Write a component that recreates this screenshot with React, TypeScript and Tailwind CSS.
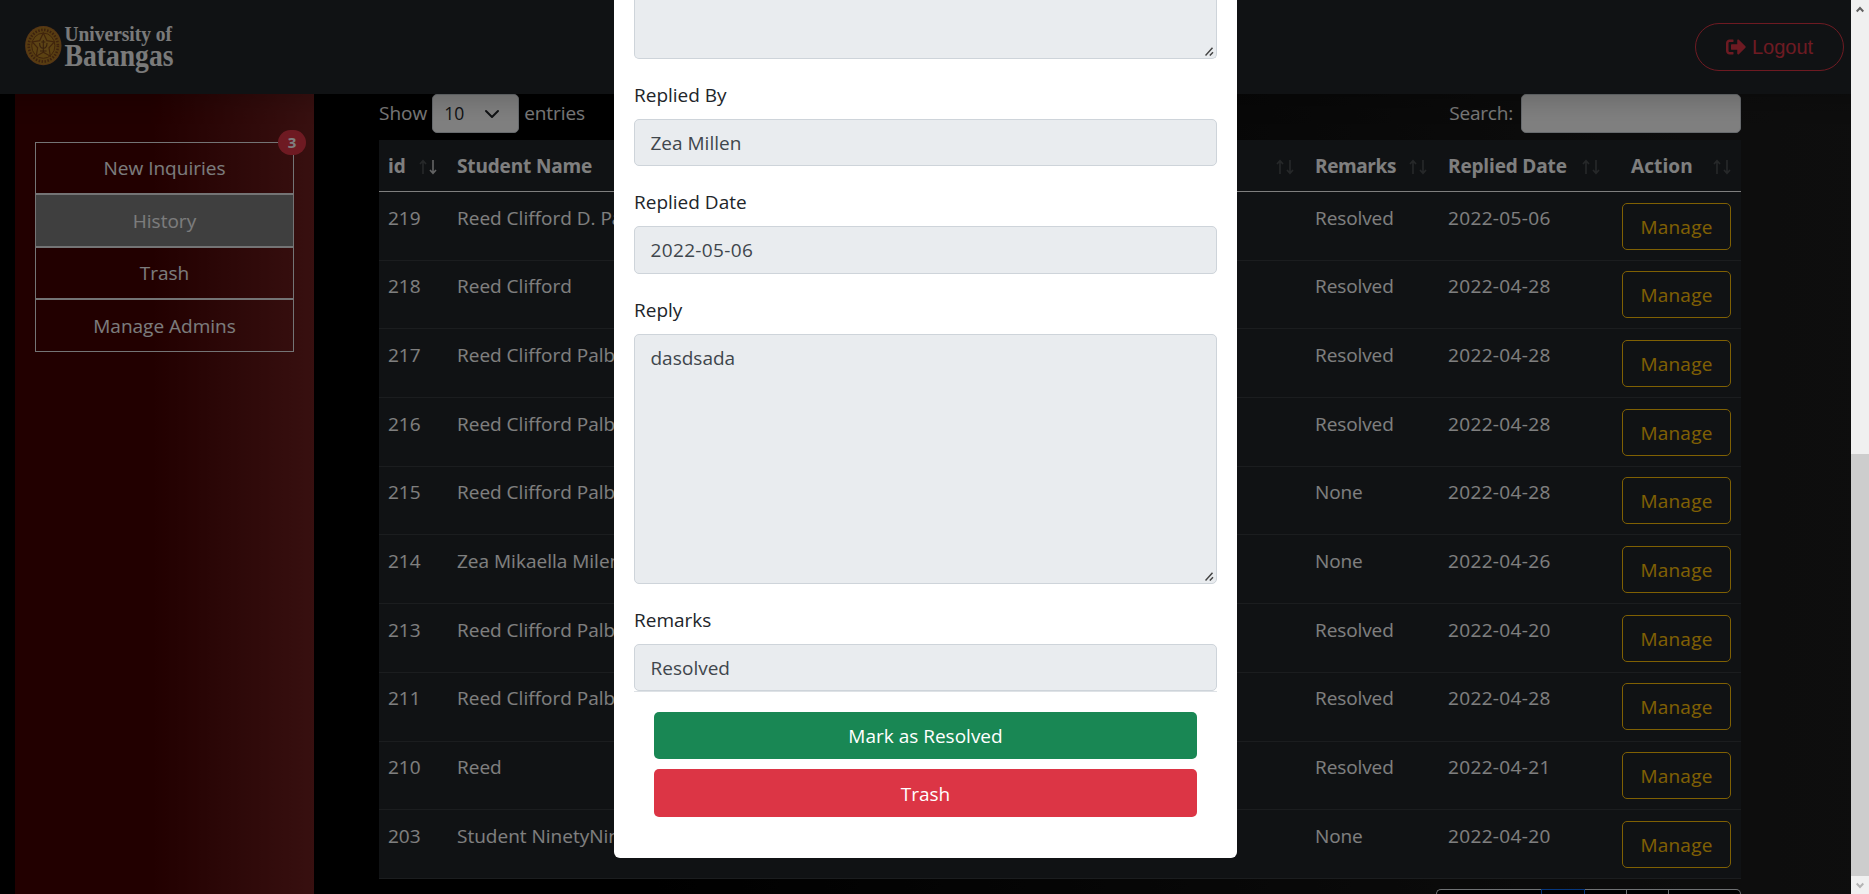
import React from "react";
import { FaSignOutAlt } from "react-icons/fa";

const rows = [
  ["219", "Reed Clifford D. Palbacal", "Resolved", "2022-05-06"],
  ["218", "Reed Clifford", "Resolved", "2022-04-28"],
  ["217", "Reed Clifford Palbacal", "Resolved", "2022-04-28"],
  ["216", "Reed Clifford Palbacal", "Resolved", "2022-04-28"],
  ["215", "Reed Clifford Palbacal", "None", "2022-04-28"],
  ["214", "Zea Mikaella Milen", "None", "2022-04-26"],
  ["213", "Reed Clifford Palbacal", "Resolved", "2022-04-20"],
  ["211", "Reed Clifford Palbacal", "Resolved", "2022-04-28"],
  ["210", "Reed", "Resolved", "2022-04-21"],
  ["203", "Student NinetyNine", "None", "2022-04-20"],
];

const columns = "grid grid-cols-[68px_858px_133px_173px_130px]";

function Logo() {
  return (
    <svg width="150" height="60" viewBox="0 0 150 60" className="block overflow-visible">
      <g transform="translate(0 -2)">
        <ellipse cx="18.3" cy="30.7" rx="18.2" ry="19.6" fill="#b06c2c" />
        <ellipse cx="18.3" cy="30.7" rx="17.2" ry="18.6" fill="#ae7a22" />
        <ellipse cx="18.3" cy="30.7" rx="14.6" ry="15.8" fill="none" stroke="#7a421c" strokeWidth="2.6" strokeDasharray="1.5 1.5" />
        <ellipse cx="18.3" cy="30.7" rx="11.6" ry="12.6" fill="#b98524" stroke="#804818" strokeWidth="1" />
        <path d="M18.3 18l3.6 7.6 7.4 1.2-5.3 6 1.3 8.4-7-4-7 4 1.3-8.4-5.3-6 7.4-1.2z" fill="#b8862a" stroke="#804818" strokeWidth="1.2" />
        <path d="M18.3 25v12M14.6 28c0 7 7.4 7 7.4 0M15 36h6.6M16.3 27h4" stroke="#70401a" strokeWidth="1.1" fill="none" />
      </g>
      <text x="39.5" y="24.2" textLength="107.5" lengthAdjust="spacingAndGlyphs" fontFamily="Liberation Serif, serif" fontWeight="700" fontSize="21.5" fill="#f4f4f4">University of</text>
      <text x="39.5" y="48.7" textLength="109" lengthAdjust="spacingAndGlyphs" fontFamily="Liberation Serif, serif" fontWeight="700" fontSize="31.5" fill="#f4f4f4">Batangas</text>
    </svg>
  );
}

function SortIcon({ desc = false }: { desc?: boolean }) {
  return (
    <svg width="18" height="16" viewBox="0 0 18 16" fill="none" stroke="#fff" strokeWidth="1.6" className="shrink-0">
      <path d="M4 15V2M1 5l3-3.4L7 5" opacity={0.2} />
      <path d="M14 1v13M11 11l3 3.4 3-3.4" opacity={desc ? 0.75 : 0.2} />
    </svg>
  );
}

function Th({ label, desc, className = "pl-[9px] pr-2.5" }: { label: string; desc?: boolean; className?: string }) {
  return (
    <div className={"flex items-center justify-between pt-0.5 " + className}>
      <span>{label}</span>
      <SortIcon desc={desc} />
    </div>
  );
}

function Grip() {
  return (
    <svg width="9" height="9" viewBox="0 0 9 9" className="absolute bottom-[2px] right-[2px]" stroke="#444" strokeWidth="1.5">
      <path d="M0.5 8.5L7.5 0.8M4.8 8.5L8 5.2" />
    </svg>
  );
}

function Label({ children }: { children: string }) {
  return <div className="mb-2.5 h-[30px] pt-px leading-[30px] text-[#212529]">{children}</div>;
}

function Field({ label, value, date = false }: { label: string; value: string; date?: boolean }) {
  return (
    <div className="mt-5">
      <Label>{label}</Label>
      <div
        className={
          "h-[47.5px] rounded-[5px] border border-[#ced4da] bg-[#e9ecef] px-[15.5px] leading-[46px] text-[#40464c] " +
          (date ? "tracking-[0.35px]" : "")
        }
      >
        {value}
      </div>
    </div>
  );
}

const nav = [
  { label: "New Inquiries", size: "h-[52px]" },
  { label: "History", size: "h-[53px]" },
  { label: "Trash", size: "h-[52px]" },
  { label: "Manage Admins", size: "h-[53px]" },
];

export default function App() {
  return (
    <div className="relative flex h-[894px] w-full overflow-hidden bg-black font-['Open_Sans',sans-serif] text-[19px] tracking-[0px]">
      <div className="flex min-w-0 flex-1 flex-col bg-[linear-gradient(90deg,#000_0%,#000_33%,#1a1a1a_90%,#1c1c1c_100%)]">
        <header className="relative z-10 flex h-[94px] shrink-0 items-center justify-between bg-[#212529] pl-[25px] pr-[25px] shadow-[0_10px_20px_rgba(0,0,0,0.15)]">
          <Logo />
          <button className="flex h-12 w-[149px] items-center justify-center gap-[6px] rounded-full border border-[#dc3545] font-['Liberation_Sans',sans-serif] text-[20px] text-[#dc3545]">
            <FaSignOutAlt size={20} />
            <span>Logout</span>
          </button>
        </header>

        <div className="flex min-h-0 flex-1">
          <aside className="ml-[15px] w-[299px] shrink-0 bg-[linear-gradient(90deg,#440000_0%,#440000_45%,#702020_100%)] px-5 pt-12">
            <div className="relative">
              {nav.map(({ label, size }) => (
                <div
                  key={label}
                  className={
                    "flex items-center justify-center border border-[#e8e9ea] pt-px text-[#f8f9fa] " +
                    size +
                    (label === "History" ? " bg-[#7f7f7f]" : "")
                  }
                >
                  {label}
                </div>
              ))}
              <span className="absolute -right-3 -top-3 flex h-[25px] w-7 items-center justify-center rounded-full bg-[#dc3545] text-[15px] font-bold text-white">3</span>
            </div>
          </aside>

          <main className="ml-[65px] w-[1362px] shrink-0 text-white">
            <div className="flex h-[39px] items-center justify-between">
              <div className="flex items-center gap-[5px] text-[#f0f0f0]">
                <span>Show</span>
                <div className="flex h-[39px] w-[87px] items-center justify-between rounded-[5px] border border-[#ced4da] bg-white pl-[11px] pr-[18px] text-[17.5px] text-[#212529]">
                  10
                  <svg width="16" height="10" viewBox="0 0 16 10" fill="none" stroke="#212529" strokeWidth="2" strokeLinecap="round" strokeLinejoin="round">
                    <path d="M2 2l6 6 6-6" />
                  </svg>
                </div>
                <span className="tracking-[-0.1px]">entries</span>
              </div>
              <div className="flex items-center gap-[8px] tracking-[-0.2px] text-[#f0f0f0]">
                <span>Search:</span>
                <div className="h-[39px] w-[220px] rounded-[5px] border border-[#ced4da] bg-white" />
              </div>
            </div>

            <div className="mt-[7px] bg-[#212529]">
              <div className={columns + " h-[52px] border-b border-white font-bold tracking-[-0.15px]"}>
                <Th label="id" desc />
                <Th label="Student Name" className="pl-2.5 pr-[11px]" />
                <Th label="Remarks" className="pl-2.5 pr-[11px] tracking-[-0.4px]" />
                <Th label="Replied Date" className="pl-2.5 pr-[11px]" />
                <Th label="Action" className="pl-[20px] pr-2.5 tracking-[0.1px]" />
              </div>
              {rows.map(([id, name, remark, date]) => (
                <div key={id} className={columns + " h-[68.7px] border-b border-[#373b3e] pt-[10.5px] leading-[30px]"}>
                  <div className="pl-[9px]">{id}</div>
                  <div className="pl-2.5">{name}</div>
                  <div className="pl-2.5 tracking-[-0.1px]">{remark}</div>
                  <div className="pl-2.5 tracking-[0.35px]">{date}</div>
                  <div className="pl-[11px]">
                    <button className="flex h-[47px] w-[109px] items-center justify-center rounded-[5px] border border-[#ffc107] pt-px tracking-[0.2px] text-[#ffc107]">
                      Manage
                    </button>
                  </div>
                </div>
              ))}
            </div>

            <div className="mt-2.5 flex justify-end">
              <div className="h-[47px] w-[105px] rounded-l-[5px] border border-r-0 border-[#dee2e6] bg-black" />
              <div className="h-[47px] w-[44px] border border-[#0d6efd] bg-black" />
              <div className="h-[47px] w-[42px] border border-l-0 border-[#dee2e6] bg-black" />
              <div className="h-[47px] w-[42px] border border-l-0 border-[#dee2e6] bg-black" />
              <div className="h-[47px] w-[72px] rounded-r-[5px] border border-l-0 border-[#dee2e6] bg-black" />
            </div>
          </main>
        </div>
      </div>

      <div className="absolute inset-0 z-20 flex bg-black/50">
        <div className="flex flex-1 justify-center">
          <div className="h-[858px] w-[623px] rounded-b-[6px] bg-white px-5">
            <div className="relative h-[58.7px] rounded-b-[5px] border border-t-0 border-[#ced4da] bg-[#e9ecef]">
              <Grip />
            </div>
            <Field label="Replied By" value="Zea Millen" />
            <Field label="Replied Date" value="2022-05-06" date />
            <div className="mt-5">
              <Label>Reply</Label>
              <div className="relative h-[250px] rounded-[5px] border border-[#ced4da] bg-[#e9ecef] px-[15.5px] pt-[8px] leading-[30px] text-[#40464c]">
                dasdsada
                <Grip />
              </div>
            </div>
            <Field label="Remarks" value="Resolved" />
            <div className="flex flex-col gap-2.5 border-t border-[#dee2e6] px-5 pt-[19.8px] text-white">
              <button className="h-[47.5px] rounded-[5px] bg-[#198754] pt-px">Mark as Resolved</button>
              <button className="h-[47.5px] rounded-[5px] bg-[#dc3545] pt-0.5">Trash</button>
            </div>
          </div>
        </div>
        <div className="flex w-[18px] shrink-0 flex-col bg-[#f0f0f0]">
          <div className="flex h-[18px] items-center justify-center">
            <svg width="8" height="7" viewBox="0 0 8 7" fill="none" stroke="#606060" strokeWidth="2">
              <path d="M0.7 5.5L4 2l3.3 3.5" />
            </svg>
          </div>
          <div className="mt-[436px] h-[422px] bg-[#cdcdcd]" />
          <div className="flex h-[18px] items-center justify-center">
            <svg width="8" height="7" viewBox="0 0 8 7" fill="none" stroke="#b4b4b4" strokeWidth="2">
              <path d="M0.7 1.5L4 5l3.3-3.5" />
            </svg>
          </div>
        </div>
      </div>
    </div>
  );
}
